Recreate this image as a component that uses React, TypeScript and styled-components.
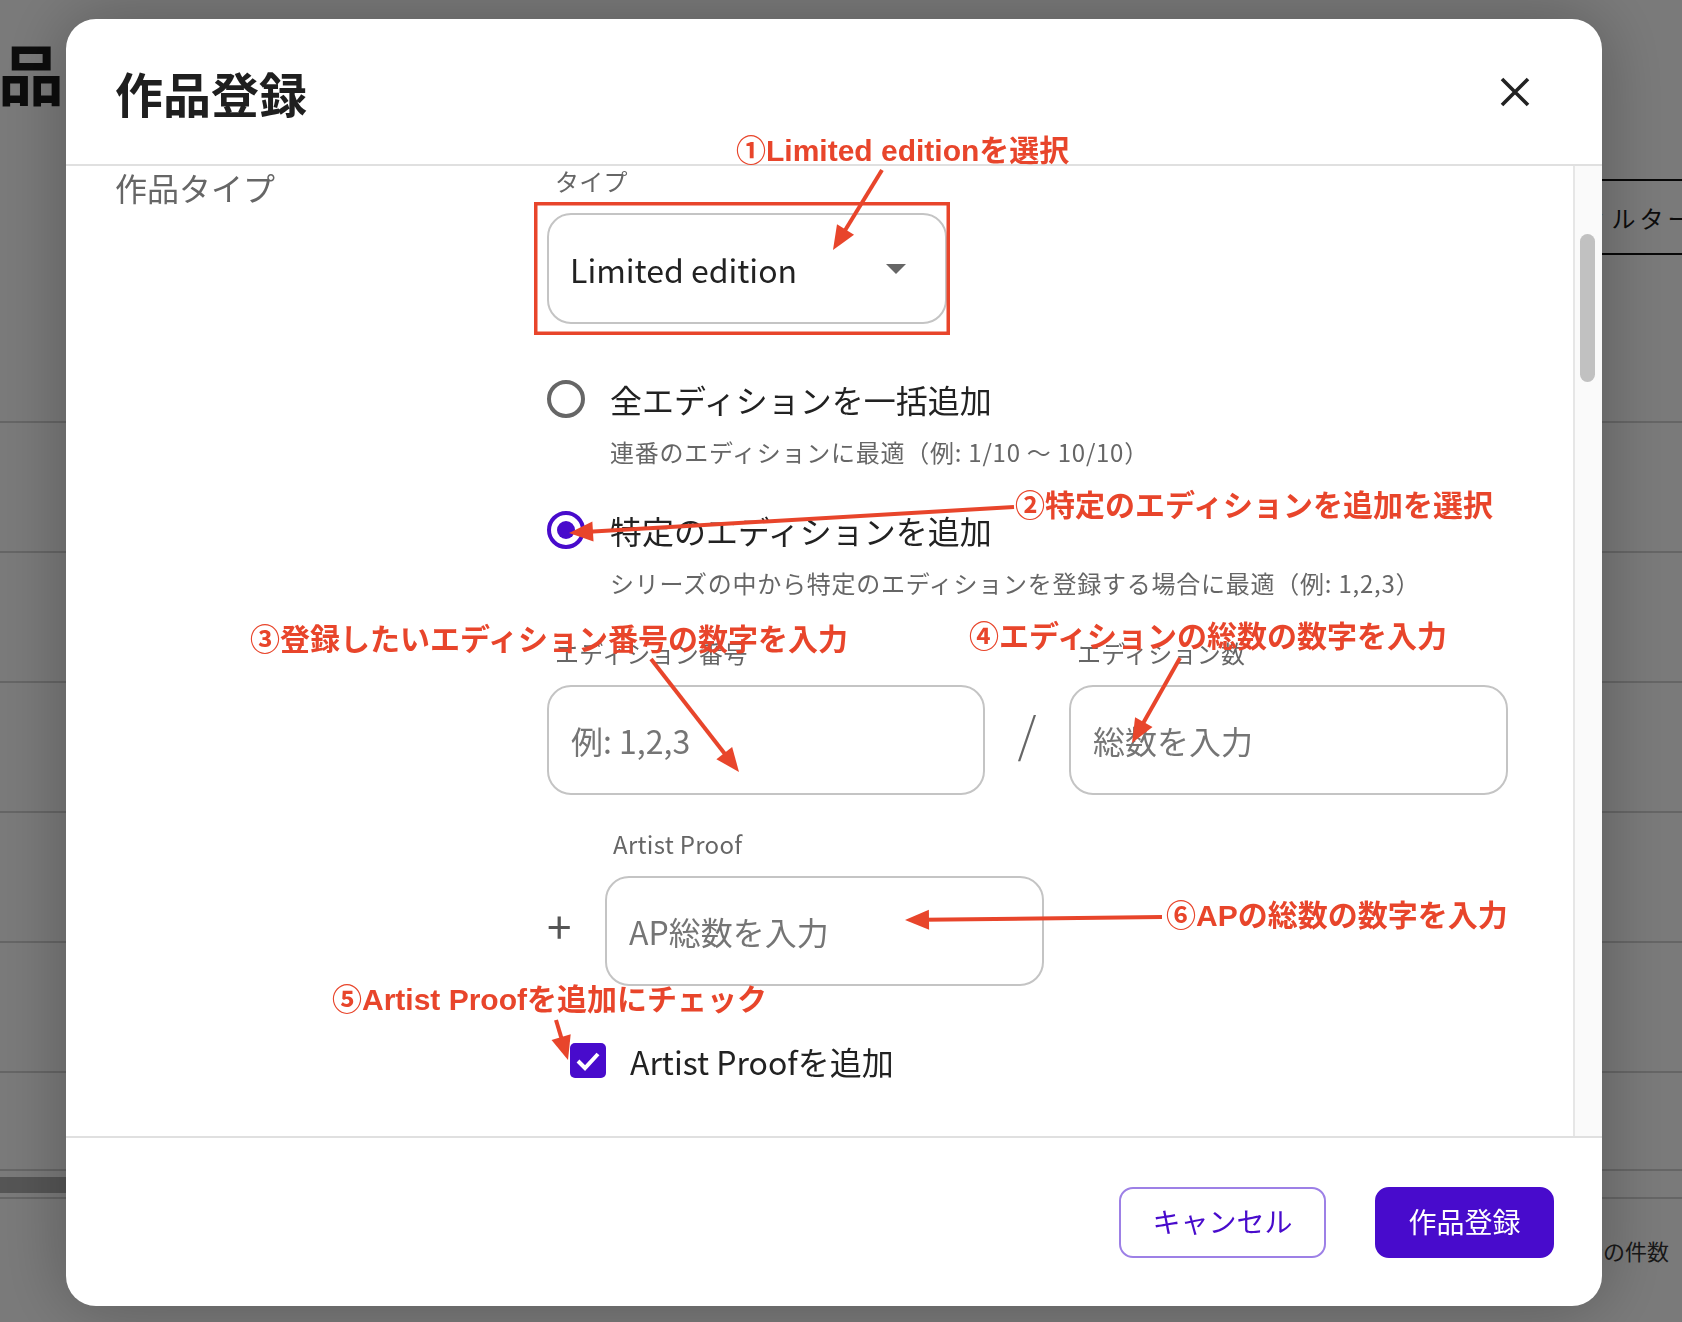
import React from 'react';
import styled, { createGlobalStyle } from 'styled-components';

const PURPLE = '#480bcc';
const RED = '#e8452b';

const GlobalStyle = createGlobalStyle`
  html, body {
    margin: 0;
    padding: 0;
  }
  body {
    width: 1682px;
    height: 1322px;
    overflow: hidden;
    background: #fff;
    font-family: "Noto Sans CJK JP", "Noto Sans", sans-serif;
  }
  * {
    box-sizing: border-box;
  }
`;

/* ---------- page behind the dialog ---------- */

const BgPage = styled.div`
  height: 1322px;
  overflow: hidden;
  color: #1a1a1a;
`;

const BgTitle = styled.h1`
  margin: 38px 0 0 -68px;
  font-size: 66px;
  font-weight: 700;
  line-height: 1;
  white-space: nowrap;
`;

const BgToolbar = styled.div`
  display: flex;
  margin-top: 75px;
  padding-left: 1540px;
  white-space: nowrap;
`;

const FilterButton = styled.div`
  flex-shrink: 0;
  display: flex;
  align-items: center;
  height: 76px;
  padding: 0 14px;
  border: 2px solid #111;
  font-size: 24px;
  letter-spacing: 4px;
`;

const BgRow = styled.div<{ $h: number }>`
  height: ${({ $h }) => $h}px;
  border-bottom: 2px solid #d4d4d4;
`;

const BgScroll = styled.div`
  width: 420px;
  height: 16px;
  margin-top: 6px;
  background: #b2b2b2;
`;

const BgRule = styled.div`
  height: 2px;
  margin-top: 4px;
  background: #d4d4d4;
`;

const BgFooter = styled.div`
  margin-top: 40px;
  padding-left: 1559px;
  font-size: 22px;
  line-height: 1;
  white-space: nowrap;
  color: #333;
`;

const Overlay = styled.div`
  position: fixed;
  inset: 0;
  background: rgba(0, 0, 0, 0.52);
`;

/* ---------- dialog ---------- */

const Modal = styled.div`
  position: fixed;
  left: 66px;
  top: 19px;
  width: 1536px;
  height: 1287px;
  display: flex;
  flex-direction: column;
  background: #fff;
  border-radius: 30px;
  box-shadow: 0 0 70px rgba(0, 0, 0, 0.28);
  overflow: hidden;
`;

const Header = styled.header`
  flex: 0 0 147px;
  display: flex;
  align-items: center;
  justify-content: space-between;
  padding: 0 72px 0 49px;
  border-bottom: 2px solid #e0e0e0;
`;

const Title = styled.h2`
  margin: 0;
  font-size: 48px;
  font-weight: 700;
  line-height: 1;
  color: #1f1f1f;
`;

const CloseButton = styled.button`
  display: flex;
  padding: 0;
  border: none;
  background: none;
  cursor: pointer;
`;

const Body = styled.div`
  flex: 1;
  min-height: 0;
  display: flex;
`;

const Content = styled.div`
  flex: 1;
  display: grid;
  grid-template-columns: 432px 1fr;
  align-content: start;
  padding-left: 49px;
`;

const ScrollTrack = styled.div`
  width: 29px;
  padding: 68px 0 0 5px;
  background: #fafafa;
  border-left: 2px solid #e6e6e6;
`;

const ScrollThumb = styled.div`
  width: 15px;
  height: 148px;
  border-radius: 8px;
  background: #c1c1c1;
`;

const SectionLabel = styled.div`
  margin-top: 5px;
  font-size: 32px;
  line-height: 1;
  color: #666;
`;

const Column = styled.div`
  display: flex;
  flex-direction: column;
`;

const FloatLabel = styled.label<{ $top?: number }>`
  margin: ${({ $top = 0 }) => $top}px 0 0 8px;
  font-size: 24px;
  line-height: 1;
  letter-spacing: 0.3px;
  color: #666;
  white-space: nowrap;
`;

const SelectBox = styled.div`
  display: flex;
  align-items: center;
  justify-content: space-between;
  width: 400px;
  height: 111px;
  margin-top: 20px;
  padding: 0 39px 0 21px;
  border: 2px solid #c4c4c4;
  border-radius: 24px;
  font-size: 32px;
  line-height: 1;
  color: #222;
`;

const Caret = styled.span`
  width: 0;
  height: 0;
  border-left: 10px solid transparent;
  border-right: 10px solid transparent;
  border-top: 10px solid #666;
`;

const RadioOption = styled.div<{ $top: number }>`
  display: flex;
  flex-direction: column;
  margin-top: ${({ $top }) => $top}px;
`;

const RadioRow = styled.label`
  display: flex;
  align-items: center;
  gap: 25px;
`;

const Radio = styled.span<{ $checked?: boolean }>`
  display: flex;
  align-items: center;
  justify-content: center;
  width: 38px;
  height: 38px;
  border-radius: 50%;
  border: 4px solid ${({ $checked }) => ($checked ? PURPLE : '#666')};

  &::after {
    content: '';
    display: ${({ $checked }) => ($checked ? 'block' : 'none')};
    width: 18px;
    height: 18px;
    border-radius: 50%;
    background: ${PURPLE};
  }
`;

const OptionText = styled.span`
  font-size: 32px;
  line-height: 1;
  color: #222;
`;

const OptionHint = styled.div`
  margin-top: 22px;
  padding-left: 63px;
  font-size: 24px;
  line-height: 1;
  letter-spacing: 0.75px;
  color: #666;
  white-space: nowrap;
`;

const FieldRow = styled.div<{ $top: number }>`
  display: flex;
  align-items: flex-end;
  margin-top: ${({ $top }) => $top}px;
`;

const Field = styled.div<{ $w: number }>`
  display: flex;
  flex-direction: column;
  gap: 20px;
  width: ${({ $w }) => $w}px;
`;

const TextInput = styled.input`
  width: 100%;
  height: 110px;
  padding: 0 22px;
  border: 2px solid #c4c4c4;
  border-radius: 24px;
  background: #fff;
  font-family: "Noto Sans CJK JP", "Noto Sans", sans-serif;
  font-size: 32px;
  color: #222;
  outline: none;

  &::placeholder {
    color: #757575;
    opacity: 1;
  }
`;

const Slash = styled.span`
  display: flex;
  align-items: center;
  justify-content: center;
  width: 84px;
  height: 110px;
  padding-bottom: 16px;
  font-size: 48px;
  font-weight: 300;
  color: #666;
`;

const PlusBox = styled.span`
  display: flex;
  align-items: center;
  width: 58px;
  height: 110px;
  padding-bottom: 13px;
  font-size: 44px;
  line-height: 1;
  color: #555;
`;

const CheckRow = styled.label`
  display: flex;
  align-items: center;
  gap: 24px;
  margin-top: 57px;
  padding-left: 23px;
`;

const CheckBox = styled.span`
  display: flex;
  align-items: center;
  justify-content: center;
  width: 36px;
  height: 35px;
  border-radius: 5px;
  background: ${PURPLE};
`;

const Footer = styled.footer`
  flex: 0 0 170px;
  display: flex;
  align-items: center;
  justify-content: flex-end;
  gap: 49px;
  padding-right: 48px;
  border-top: 2px solid #e0e0e0;
`;

const Button = styled.button<{ $primary?: boolean }>`
  height: 71px;
  padding: 0 0 2px;
  width: ${({ $primary }) => ($primary ? 179 : 207)}px;
  border-radius: 14px;
  border: 2px solid ${({ $primary }) => ($primary ? PURPLE : '#9d80e6')};
  background: ${({ $primary }) => ($primary ? PURPLE : '#fff')};
  color: ${({ $primary }) => ($primary ? '#fff' : PURPLE)};
  font-family: "Noto Sans CJK JP", "Noto Sans", sans-serif;
  font-size: 28px;
  line-height: 1;
  cursor: pointer;
`;

/* ---------- red instructions drawn on top ---------- */

const Callouts = styled.div`
  position: fixed;
  inset: 0;
  pointer-events: none;
`;

const Note = styled.span<{ $x: number; $y: number }>`
  position: absolute;
  left: ${({ $x }) => $x}px;
  top: ${({ $y }) => $y}px;
  font-family: "Liberation Sans", "Noto Sans CJK JP", sans-serif;
  font-size: 30px;
  font-weight: 700;
  line-height: 1;
  color: ${RED};
  white-space: nowrap;
`;

const Marks = styled.svg`
  position: absolute;
  inset: 0;
`;

const notes = [
  { x: 736, y: 136, text: '①Limited editionを選択' },
  { x: 1015, y: 491, text: '②特定のエディションを追加を選択' },
  { x: 250, y: 625, text: '③登録したいエディション番号の数字を入力' },
  { x: 969, y: 622, text: '④エディションの総数の数字を入力' },
  { x: 332, y: 985, text: '⑤Artist Proofを追加にチェック' },
  { x: 1166, y: 901, text: '⑥APの総数の数字を入力' },
];

const arrows: [number, number, number, number][] = [
  [882, 170, 833, 250],
  [1014, 507, 569, 533],
  [651, 659, 739, 772],
  [1180, 658, 1132, 743],
  [556, 1020, 568, 1060],
  [1162, 917, 905, 920],
];

const Arrow = ({ x1, y1, x2, y2 }: { x1: number; y1: number; x2: number; y2: number }) => {
  const len = Math.hypot(x2 - x1, y2 - y1);
  const ux = (x2 - x1) / len;
  const uy = (y2 - y1) / len;
  const head = 24;
  const half = 10;
  const bx = x2 - ux * head;
  const by = y2 - uy * head;
  const pts = `${x2},${y2} ${bx - uy * half},${by + ux * half} ${bx + uy * half},${by - ux * half}`;
  return (
    <g>
      <line x1={x1} y1={y1} x2={bx + ux * 4} y2={by + uy * 4} stroke={RED} strokeWidth={4} />
      <polygon points={pts} fill={RED} />
    </g>
  );
};

const App: React.FC = () => {
  return (
    <>
      <GlobalStyle />
      <BgPage>
        <BgTitle>作品一覧</BgTitle>
        <BgToolbar>
          <FilterButton>フィルター</FilterButton>
        </BgToolbar>
        <BgRow $h={168} />
        <BgRow $h={130} />
        <BgRow $h={130} />
        <BgRow $h={130} />
        <BgRow $h={130} />
        <BgRow $h={130} />
        <BgRow $h={98} />
        <BgScroll />
        <BgRule />
        <BgFooter>表示の件数</BgFooter>
      </BgPage>
      <Overlay />

      <Modal>
        <Header>
          <Title>作品登録</Title>
          <CloseButton aria-label="閉じる">
            <svg width="30" height="30" viewBox="0 0 30 30">
              <path d="M2 2 L28 28 M28 2 L2 28" stroke="#222" strokeWidth="3.6" />
            </svg>
          </CloseButton>
        </Header>

        <Body>
          <Content>
            <SectionLabel>作品タイプ</SectionLabel>
            <Column>
              <FloatLabel $top={3}>タイプ</FloatLabel>
              <SelectBox>
                Limited edition
                <Caret />
              </SelectBox>

              <RadioOption $top={56}>
                <RadioRow>
                  <Radio />
                  <OptionText>全エディションを一括追加</OptionText>
                </RadioRow>
                <OptionHint>連番のエディションに最適（例: 1/10 〜 10/10）</OptionHint>
              </RadioOption>

              <RadioOption $top={47}>
                <RadioRow>
                  <Radio $checked />
                  <OptionText>特定のエディションを追加</OptionText>
                </RadioRow>
                <OptionHint>シリーズの中から特定のエディションを登録する場合に最適（例: 1,2,3）</OptionHint>
              </RadioOption>

              <FieldRow $top={46}>
                <Field $w={438}>
                  <FloatLabel>エディション番号</FloatLabel>
                  <TextInput placeholder="例: 1,2,3" />
                </Field>
                <Slash>/</Slash>
                <Field $w={439}>
                  <FloatLabel>エディション数</FloatLabel>
                  <TextInput placeholder="総数を入力" />
                </Field>
              </FieldRow>

              <FieldRow $top={37}>
                <PlusBox>+</PlusBox>
                <Field $w={439}>
                  <FloatLabel>Artist Proof</FloatLabel>
                  <TextInput placeholder="AP総数を入力" />
                </Field>
              </FieldRow>

              <CheckRow>
                <CheckBox>
                  <svg width="26" height="22" viewBox="0 0 26 22">
                    <path d="M3 11 L10 18 L23 4" fill="none" stroke="#fff" strokeWidth="4" />
                  </svg>
                </CheckBox>
                <OptionText>Artist Proofを追加</OptionText>
              </CheckRow>
            </Column>
          </Content>
          <ScrollTrack>
            <ScrollThumb />
          </ScrollTrack>
        </Body>

        <Footer>
          <Button>キャンセル</Button>
          <Button $primary>作品登録</Button>
        </Footer>
      </Modal>

      <Callouts>
        <Marks width="1682" height="1322" viewBox="0 0 1682 1322">
          <rect x="535.75" y="203.75" width="412.5" height="129.5" fill="none" stroke={RED} strokeWidth="3.5" />
          {arrows.map(([x1, y1, x2, y2], i) => (
            <Arrow key={i} x1={x1} y1={y1} x2={x2} y2={y2} />
          ))}
        </Marks>
        {notes.map((n) => (
          <Note key={n.text} $x={n.x} $y={n.y}>
            {n.text}
          </Note>
        ))}
      </Callouts>
    </>
  );
};

export default App;
